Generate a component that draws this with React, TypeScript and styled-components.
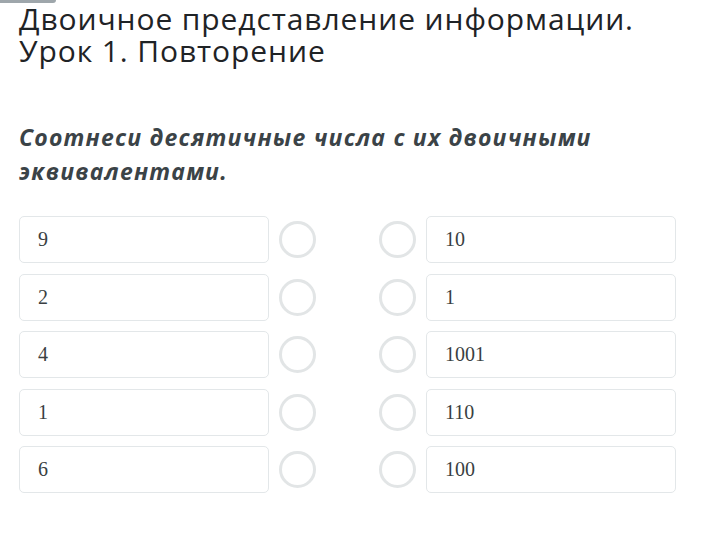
import styled, { createGlobalStyle } from 'styled-components';

const GlobalStyle = createGlobalStyle`
  body {
    margin: 0;
    background: #ffffff;
  }
`;

const leftItems = ['9', '2', '4', '1', '6'];
const rightItems = ['10', '1', '1001', '110', '100'];

const App = () => {
  return (
    <Page>
      <GlobalStyle />
      <TopTab />
      <Title>
        <TitleLine>Двоичное представление информации.</TitleLine>
        <TitleLine>Урок 1. Повторение</TitleLine>
      </Title>
      <Question>Соотнеси десятичные числа с их двоичными эквивалентами.</Question>
      <Board>
        {leftItems.map((left, i) => (
          <Row key={i}>
            <Cell>{left}</Cell>
            <Dot />
            <span />
            <Dot />
            <Cell>{rightItems[i]}</Cell>
          </Row>
        ))}
      </Board>
    </Page>
  );
};

export default App;

const Page = styled.div`
  width: 707px;
  height: 549px;
  overflow: hidden;
  background: #ffffff;
`;

const TopTab = styled.div`
  width: 56px;
  height: 3px;
  background: #9ea6ab;
  border-bottom-right-radius: 3px;
`;

const Title = styled.h1`
  margin: 0;
  padding: 0 0 0 19px;
  font-family: 'Open Sans', sans-serif;
  font-size: 30px;
  font-weight: 400;
  letter-spacing: 0.9px;
  color: #1f2326;
`;

const TitleLine = styled.div`
  height: 32px;
  line-height: 32px;
`;

const Question = styled.h2`
  margin: 53px 0 0;
  padding: 0 60px 0 19px;
  font-family: 'Open Sans', sans-serif;
  font-size: 23px;
  font-weight: 700;
  font-style: italic;
  letter-spacing: 1.2px;
  line-height: 34px;
  color: #3b4347;
`;

const Board = styled.div`
  margin-top: 28px;
  padding: 0 31px 0 19px;
  display: flex;
  flex-direction: column;
  gap: 10.5px;
`;

const Row = styled.div`
  display: grid;
  grid-template-columns: 250px 37px 43px 37px 250px;
  column-gap: 10px;
  align-items: center;
  height: 47px;
`;

const Cell = styled.div`
  box-sizing: border-box;
  height: 47px;
  border: 1px solid #e3e7e9;
  border-radius: 5px;
  padding-left: 18px;
  display: flex;
  align-items: center;
  font-family: 'Liberation Serif', serif;
  font-size: 20px;
  color: #3a3f42;
`;

const Dot = styled.div`
  box-sizing: border-box;
  width: 37px;
  height: 37px;
  border: 3px solid #e2e5e6;
  border-radius: 50%;
`;
